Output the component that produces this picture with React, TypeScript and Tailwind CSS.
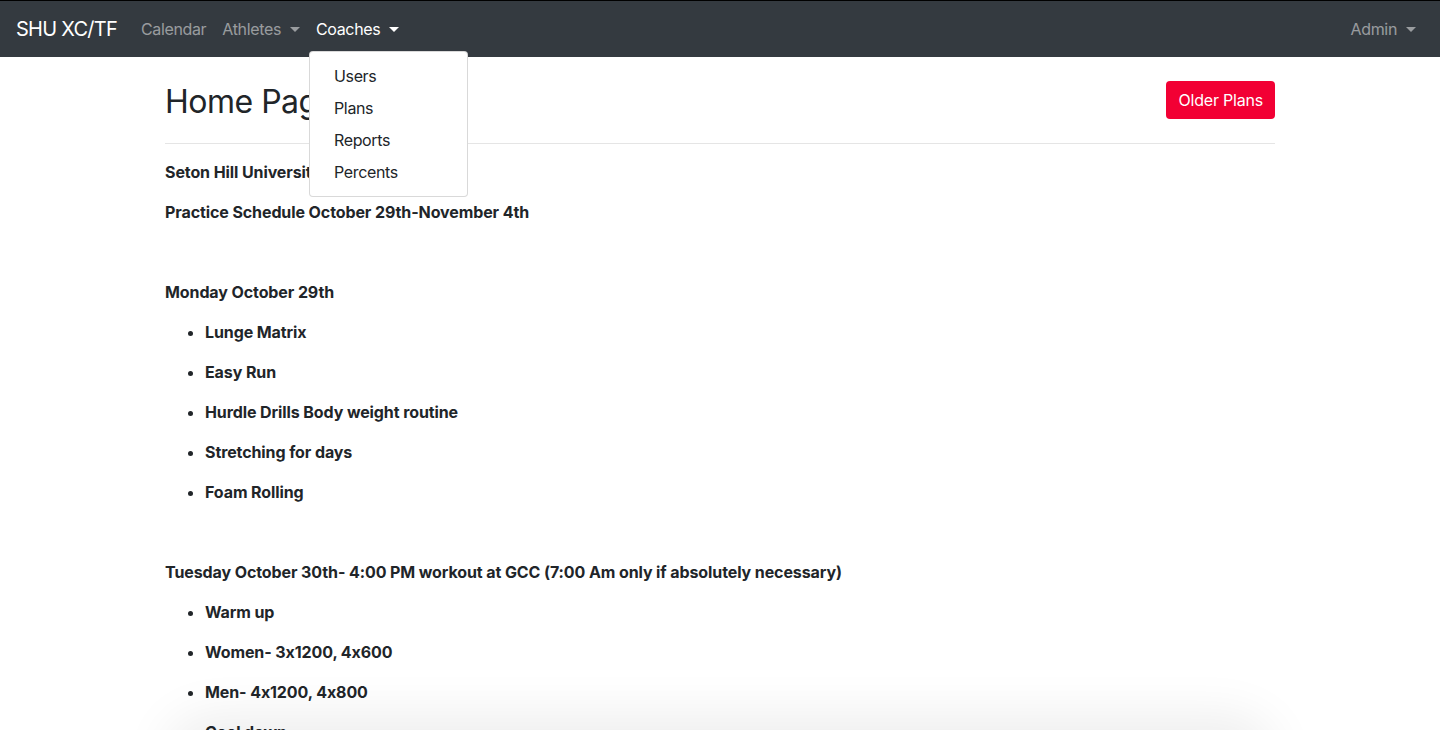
import React from "react";

const Caret = () => (
  <span className="ml-[9px] inline-block w-0 h-0 align-[3px] border-t-[5px] border-t-current border-x-[5px] border-x-transparent" />
);

export default function App() {
  const font = { fontFamily: "Inter, 'Noto Sans', 'Liberation Sans', sans-serif" };
  return (
    <div className="min-h-screen bg-white text-[#212529] text-[16px] leading-6 relative overflow-hidden [font-feature-settings:'calt'_0]" style={font}>
      <nav className="bg-[#343a40] h-[57px] px-4 flex items-center border-t border-black tracking-[-0.35px]">
        <span className="text-white text-[20px] leading-[30px] mr-4 tracking-[-0.75px]">SHU XC/TF</span>
        <ul className="flex items-center">
          <li className="px-2 py-2 text-white/50">Calendar</li>
          <li className="px-2 py-2 text-white/50 flex items-center">Athletes<Caret /></li>
          <li className="relative px-2 py-2 text-white flex items-center">
            Coaches<Caret />
            <div className="absolute left-[1px] top-[42px] w-[159px] bg-white border border-black/15 rounded py-2 z-10 text-[#212529]">
              <div className="px-6 leading-8">Users</div>
              <div className="px-6 leading-8">Plans</div>
              <div className="px-6 leading-8">Reports</div>
              <div className="px-6 leading-8">Percents</div>
            </div>
          </li>
        </ul>
        <div className="ml-auto px-2 py-2 text-white/50 flex items-center">Admin<Caret /></div>
      </nav>

      <main className="w-[1140px] mx-auto px-[15px]">
        <div className="flex items-start justify-between mt-6">
          <h2 className="text-[32px] leading-[42px] mb-[-4px] font-normal tracking-[-0.5px]">Home Page</h2>
          <button className="bg-[#f20034] text-white px-3 h-[38px] rounded-[4px] tracking-[-0.2px]">Older Plans</button>
        </div>
        <hr className="mt-6 mb-4 border-0 border-t border-black/10" />
        <div className="font-bold tracking-[-0.1px]">
          <p className="mb-4">Seton Hill University XC/TF</p>
          <p className="mb-4">Practice Schedule October 29th-November 4th</p>
          <p className="mb-4">&nbsp;</p>
          <p className="mb-4">Monday October 29th</p>
          <ul className="list-disc pl-10 mb-4">
            <li><p className="mb-4">Lunge Matrix</p></li>
            <li><p className="mb-4">Easy Run</p></li>
            <li><p className="mb-4">Hurdle Drills Body weight routine</p></li>
            <li><p className="mb-4">Stretching for days</p></li>
            <li><p className="mb-4">Foam Rolling</p></li>
          </ul>
          <p className="mb-4">&nbsp;</p>
          <p className="mb-4">Tuesday October 30th- 4:00 PM workout at GCC (7:00 Am only if absolutely necessary)</p>
          <ul className="list-disc pl-10 mb-4">
            <li><p className="mb-4">Warm up</p></li>
            <li><p className="mb-4">Women- 3x1200, 4x600</p></li>
            <li><p className="mb-4">Men- 4x1200, 4x800</p></li>
            <li><p className="mb-4">Cool down</p></li>
          </ul>
        </div>
      </main>

      <div className="pointer-events-none fixed left-[190px] right-[190px] top-[740px] h-[40px] rounded-[40px] shadow-[0_0_50px_25px_rgba(0,0,0,0.07)]" />
    </div>
  );
}
